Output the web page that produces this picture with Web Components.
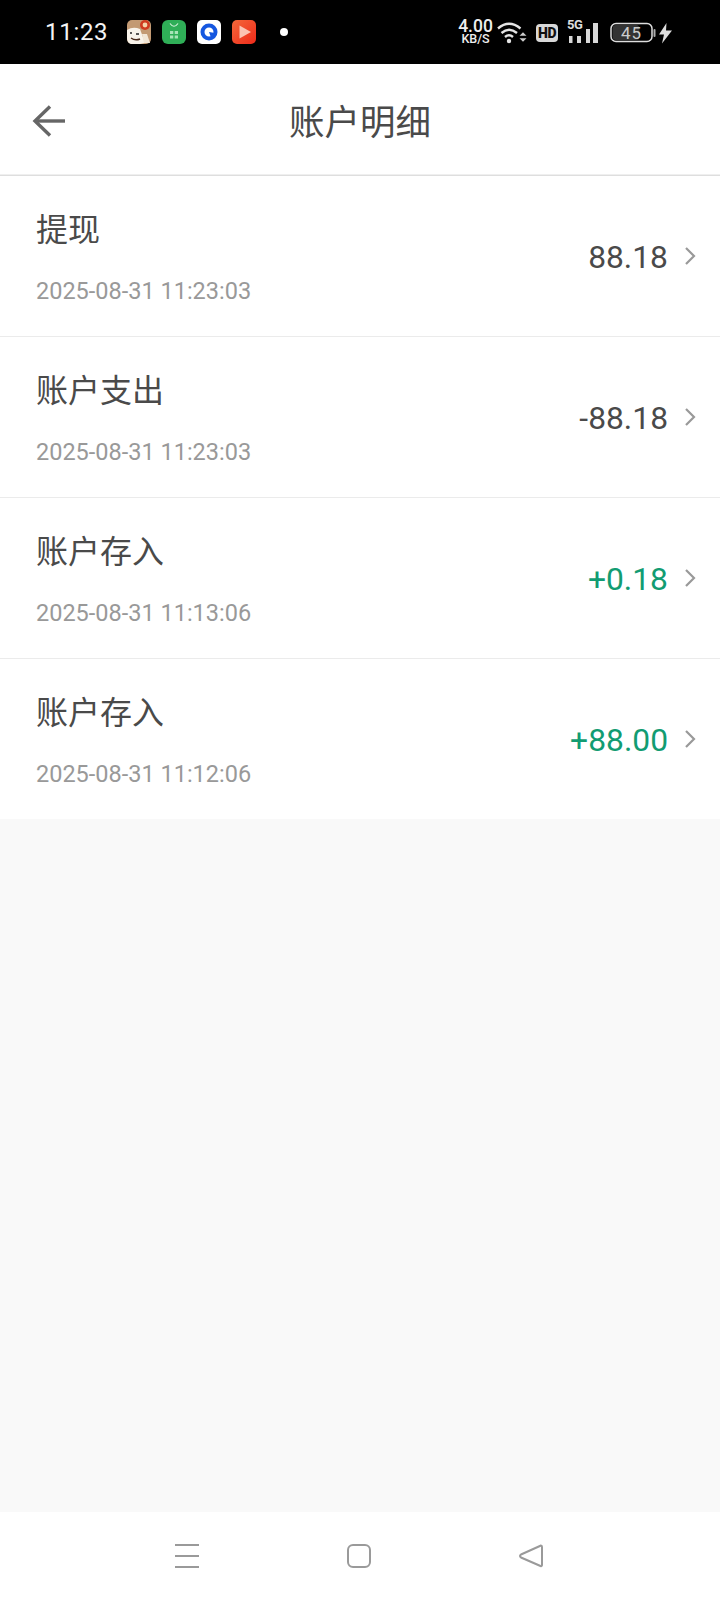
<!DOCTYPE html>
<html lang="zh">
<head>
<meta charset="utf-8">
<style>
  html, body { margin: 0; padding: 0; }
  body { width: 720px; height: 1600px; background: #f9f9f9; font-family: Roboto, "Noto Sans CJK SC", sans-serif; }
  #app { display: flex; flex-direction: column; height: 1600px; }
</style>
</head>
<body>
<div id="app">
  <status-bar></status-bar>
  <nav-header>账户明细</nav-header>
  <detail-list>
    <detail-row titulo="提现" fecha="2025-08-31 11:23:03" monto="88.18"></detail-row>
    <detail-row titulo="账户支出" fecha="2025-08-31 11:23:03" monto="-88.18"></detail-row>
    <detail-row titulo="账户存入" fecha="2025-08-31 11:13:06" monto="+0.18" tipo="in"></detail-row>
    <detail-row titulo="账户存入" fecha="2025-08-31 11:12:06" monto="+88.00" tipo="in"></detail-row>
  </detail-list>
  <nav-bar></nav-bar>
</div>
<script>
class StatusBar extends HTMLElement {
    constructor() {
        super();
        this.attachShadow({ mode: 'open' });
        this.shadowRoot.innerHTML = `
            <style>
                :host { display: flex; align-items: center; height: 64px; background: #000; color: #fff; box-sizing: border-box; padding-left: 45px; flex: none; }
                .time { font-size: 24px; color: #f4f4f4; width: 82px; letter-spacing: .7px; }
                .apps { display: flex; gap: 11px; }
                .apps svg { display: block; width: 24px; height: 24px; }
                .dot { width: 8px; height: 8px; border-radius: 50%; background: #fff; margin-left: 24px; }
                .right { margin-left: 170px; display: flex; align-items: center; }
                .speed { width: 35px; display: flex; flex-direction: column; align-items: center; color: #eee; font-weight: 500; margin-top: 1px; }
                .speed b { font-weight: 500; font-size: 17.500px; line-height: 13px; }
                .speed i { font-style: normal; font-size: 12.500px; line-height: 12px; }
                .right svg { display: block; }
                .hd { margin-left: 9px; width: 22px; height: 18px; border-radius: 4px; background: #d8d8d8; color: #111; font-size: 14px; font-weight: 900; display: flex; align-items: center; justify-content: center; letter-spacing: -.5px; margin-top: 2px; }
                .sig { margin-left: 11px; position: relative; width: 32px; height: 24px; margin-top: 2px; }
                .sig span { position: absolute; left: -2px; top: -4px; font-size: 13px; font-weight: 700; color: #ddd; letter-spacing: -.5px; }
                .bat { margin-left: 9px; margin-top: 2px; }
            </style>
            <span class="time">11:23</span>
            <div class="apps">
                <svg viewBox="0 0 24 24">
                    <rect width="24" height="24" rx="5" fill="#c39a73"/>
                    <path d="M0 10 Q6 6 13 9 L18 23 Q10 25 4 24 Q0 23 0 18Z" fill="#f8f3ea"/>
                    <path d="M15 14h5l3 9h-6z" fill="#f1e6d6"/>
                    <circle cx="18" cy="5" r="5" fill="#cf3a1f"/><circle cx="18" cy="5" r="2.400" fill="#f4d3a8"/>
                    <path d="M3 13h2M9 14h3" stroke="#222" stroke-width="1.600"/>
                    <path d="M4 18q4 3 9 1" stroke="#4a2a1a" stroke-width="1.400" fill="none"/>
                </svg>
                <svg viewBox="0 0 24 24">
                    <rect width="24" height="24" rx="6" fill="#2fae57"/>
                    <path d="M8 3.500q4 5.500 8 0" stroke="#d5f2dc" stroke-width="1.200" fill="none"/>
                    <g fill="#a9e3b8"><rect x="8" y="11" width="3.300" height="3"/><rect x="12.700" y="11" width="3.300" height="3"/><rect x="8" y="15.500" width="3.300" height="3"/><rect x="12.700" y="15.500" width="3.300" height="3"/></g>
                </svg>
                <svg viewBox="0 0 24 24">
                    <rect width="24" height="24" rx="5" fill="#fff"/>
                    <circle cx="12" cy="12" r="6.500" fill="none" stroke="#1557e0" stroke-width="4"/>
                    <path d="M12 12l6 1-4 4.500z" fill="#1557e0"/>
                </svg>
                <svg viewBox="0 0 24 24">
                    <defs><linearGradient id="rojo" x1="0" y1="0" x2="1" y2="1"><stop offset="0" stop-color="#f4683a"/><stop offset="1" stop-color="#ee2a1a"/></linearGradient></defs>
                    <rect width="24" height="24" rx="5" fill="url(#rojo)"/>
                    <path d="M7.500 5.500v13l11.500-6.500z" fill="#fbc5b4"/>
                </svg>
            </div>
            <span class="dot"></span>
            <div class="right">
                <div class="speed"><b>4.00</b><i>KB/S</i></div>
                <svg style="margin-left:4px;margin-top:2px" width="30" height="22" viewBox="0 0 30 22" fill="none" stroke="#e4e4e4" stroke-width="2.400">
                    <path d="M1 6.500Q12-3 23.500 6.500"/><path d="M4.500 11q7.500-6.500 15.500 0"/><path d="M8 15q4-3.500 8 0"/>
                    <circle cx="12" cy="19" r="2.200" fill="#e4e4e4" stroke="none"/>
                    <path d="M22.500 13.800h7l-3.500-3.500zM22.500 16.200h7l-3.500 3.500z" fill="#ccc" stroke="none"/>
                </svg>
                <span class="hd">HD</span>
                <div class="sig">
                    <span>5G</span>
                    <svg width="32" height="24" viewBox="0 0 32 24" fill="#d8d8d8"><rect x="0" y="15" width="3.500" height="7"/><rect x="8" y="15" width="4" height="7"/><rect x="17" y="8" width="4" height="14"/><rect x="24" y="2" width="5" height="20"/></svg>
                </div>
                <svg class="bat" width="46" height="22" viewBox="0 0 46 22">
                    <rect x="1" y="1.500" width="41" height="18" rx="5" fill="#000" stroke="#ddd" stroke-width="1.500"/>
                    <rect x="2.500" y="3" width="27" height="15" rx="3.500" fill="#333"/>
                    <rect x="43.500" y="7" width="2" height="8" rx="1" fill="#aaa"/>
                    <text x="21.500" y="16.500" text-anchor="middle" font-family="Roboto, sans-serif" font-size="17" fill="#ccc" letter-spacing="1">45</text>
                </svg>
                <svg style="margin-left:2px;margin-top:2px" width="15" height="22" viewBox="0 0 15 22"><path d="M8.500 1L1 12.500h5L4 21.500 14 8.500H8z" fill="#ddd"/></svg>
            </div>
        `;
    }
}

class NavHeader extends HTMLElement {
    constructor() {
        super();
        this.attachShadow({ mode: 'open' });
        this.shadowRoot.innerHTML = `
            <style>
                :host { display: flex; align-items: center; justify-content: center; position: relative; height: 112px; box-sizing: border-box; background: #fff; border-bottom: 1px solid #dedede; box-shadow: inset 0 -1px #efefef; flex: none; font-family: "Noto Sans CJK SC", sans-serif; }
                svg { position: absolute; left: 32px; top: 40px; }
                span { font-size: 35.500px; color: #4a4a4a; line-height: 1; }
            </style>
            <svg width="34" height="34" viewBox="0 0 34 34" fill="none" stroke="#666" stroke-width="3.400"><path d="M33 17H3"/><path d="M18 2.500L3 17l15 14.500"/></svg>
            <span><slot></slot></span>
        `;
    }
}

class DetailList extends HTMLElement {
    constructor() {
        super();
        this.attachShadow({ mode: 'open' });
        this.shadowRoot.innerHTML = `
            <style>
                :host { display: block; flex: none; background: #fff; }
            </style>
            <slot></slot>
        `;
    }
}

class DetailRow extends HTMLElement {
    constructor() {
        super();
        this.attachShadow({ mode: 'open' });
    }

    connectedCallback() {
        const color = this.getAttribute('tipo') === 'in' ? '#129c72' : '#4a4a4a';
        this.shadowRoot.innerHTML = `
            <style>
                :host { display: flex; align-items: center; height: 161px; box-sizing: border-box; padding: 0 24px 0 36px; border-bottom: 1px solid #ebebeb; }
                :host(:last-child) { height: 160px; border-bottom: 0; }
                .info { flex: 1; display: flex; flex-direction: column; }
                .titulo { font-family: "Noto Sans CJK SC", sans-serif; font-size: 32px; line-height: 46px; color: #4a4a4a; margin-top: -3px; }
                .fecha { font-size: 23.500px; line-height: 28px; color: #999; margin-top: 27px; }
                .monto { font-size: 31.800px; color: ${color}; margin-right: 16px; margin-top: 2px; }
                svg { display: block; margin-top: -1px; }
            </style>
            <div class="info">
                <div class="titulo">${this.getAttribute('titulo')}</div>
                <div class="fecha">${this.getAttribute('fecha')}</div>
            </div>
            <span class="monto">${this.getAttribute('monto')}</span>
            <svg width="12" height="20" viewBox="0 0 12 20" fill="none" stroke="#999" stroke-width="2.200"><path d="M2 2l8 8-8 8"/></svg>
        `;
    }
}

class NavBar extends HTMLElement {
    constructor() {
        super();
        this.attachShadow({ mode: 'open' });
        this.shadowRoot.innerHTML = `
            <style>
                :host { display: flex; justify-content: center; align-items: flex-start; gap: 148px; margin-top: auto; height: 88px; box-sizing: border-box; padding: 32px 2px 0 0; background: #fff; flex: none; }
                svg { display: block; }
            </style>
            <svg width="24" height="24" viewBox="0 0 24 24" fill="none" stroke="#9a9a9a" stroke-width="2"><path d="M0 1h24M0 12h24M0 23h24"/></svg>
            <svg width="24" height="24" viewBox="0 0 24 24" fill="none" stroke="#9a9a9a" stroke-width="2"><rect x="1" y="1" width="22" height="22" rx="5"/></svg>
            <svg width="24" height="24" viewBox="0 0 24 24" fill="none" stroke="#9a9a9a" stroke-width="2" stroke-linejoin="round"><path d="M22 1.500Q23 1.500 23 3v18q0 1.500-1.500 1L2 13.500Q0 12 2 10.500z"/></svg>
        `;
    }
}

customElements.define('status-bar', StatusBar);
customElements.define('nav-header', NavHeader);
customElements.define('detail-list', DetailList);
customElements.define('detail-row', DetailRow);
customElements.define('nav-bar', NavBar);
</script>
</body>
</html>
